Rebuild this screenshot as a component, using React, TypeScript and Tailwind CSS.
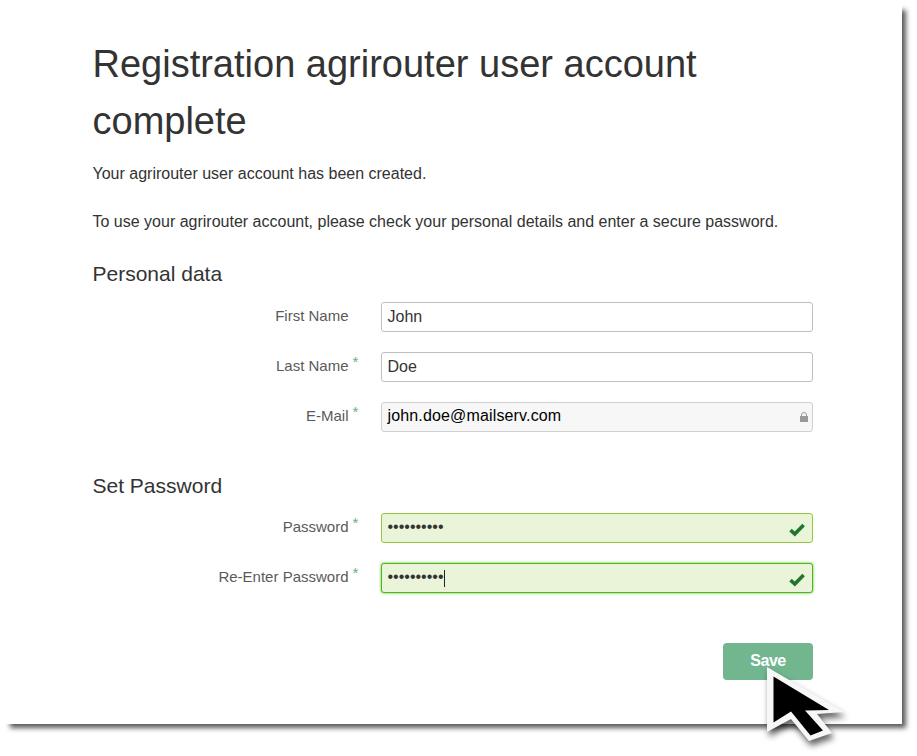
import type { ReactNode } from 'react';

type FieldProps = { label: string; required?: boolean; box: string; children: ReactNode };

function Field({ label, required, box, children }: FieldProps) {
  return (
    <div className="flex h-[30px] items-start">
      <div className="flex w-[256px] justify-end pr-[0.5px] text-[15px] leading-[28px] whitespace-nowrap text-[#5a5a5a]">{label}</div>
      <div className="w-8 pl-[3.5px] text-[15px] leading-[20px] text-[#5fb083]">{required ? '*' : ''}</div>
      <div className={`flex h-[30px] w-[432px] items-center rounded-[3px] border pl-[5.5px] text-[16px] leading-[28px] whitespace-nowrap ${box}`}>
        {children}
      </div>
    </div>
  );
}

function Check() {
  return (
    <svg className="mt-[3px] mr-[7px] ml-auto" width="16" height="14" viewBox="0 0 16 14" fill="none" stroke="#20762f" strokeWidth="3.6">
      <path d="M1.5 7.2 L5.8 11.1 L14.6 2" />
    </svg>
  );
}

export default function App() {
  return (
    <div className="relative h-[756px] w-[917px] overflow-hidden bg-white font-['Liberation_Sans',Arial,sans-serif] text-[#333]">
      <main className="h-[724px] w-[902px] bg-white pt-[36px] pl-[93px] shadow-[7px_7px_5px_-3px_rgba(0,0,0,0.65)]">
        <h1 className="-ml-[0.5px] w-[720px] text-[38px] leading-[57px]">Registration agrirouter user account complete</h1>
        <p className="mt-[12px] -ml-[0.5px] text-[16px] leading-[24px]">Your agrirouter user account has been created.</p>
        <p className="mt-[24px] -ml-[0.5px] text-[16px] leading-[24px] whitespace-nowrap">
          To use your agrirouter account, please check your personal details and enter a secure password.
        </p>
        <h2 className="mt-[25px] -ml-[0.5px] text-[21px] leading-[30px]">Personal data</h2>
        <div className="mt-[13px] flex flex-col gap-[20px]">
          <Field label="First Name" box="border-[#bfbfbf] bg-white">John</Field>
          <Field label="Last Name" required box="border-[#bfbfbf] bg-white">Doe</Field>
          <Field label="E-Mail" required box="border-[#d0d0d0] bg-[#f7f7f7] text-black">
            <span className="-mt-[3px] tracking-[0.15px]">john.doe@mailserv.com</span>
            <svg className="mr-[4px] ml-auto" width="8" height="10" viewBox="0 0 8 10">
              <path d="M1.5 5V3a2.5 2.5 0 0 1 5 0v2" fill="none" stroke="#999" />
              <path d="M0 4h8v6H0z" fill="#999" />
            </svg>
          </Field>
        </div>
        <h2 className="mt-[39px] -ml-[0.5px] text-[21px] leading-[30px]">Set Password</h2>
        <div className="mt-[12px] flex flex-col gap-[20px]">
          <Field label="Password" required box="border-[#93c83d] bg-[#e9f4d9]">
            <span className="-mt-[2px]">••••••••••</span>
            <Check />
          </Field>
          <Field label="Re-Enter Password" required box="border-[#4cb81e] bg-[#e9f4d9] shadow-[0_0_3px_#5cbf2a]">
            <span className="-mt-[2px]">••••••••••</span>
            <span className="h-[17px] w-px bg-[#222]" />
            <Check />
          </Field>
        </div>
        <div className="mt-[50px] ml-[630px] flex h-[37px] w-[90px] items-center justify-center rounded-[4px] bg-[#71b68f] pb-[2px] text-[16px] font-bold tracking-[-0.5px] text-white">
          Save
        </div>
      </main>
      <svg className="absolute top-[660px] left-[760px] drop-shadow-[2px_5px_3px_rgba(0,0,0,0.6)]" width="100" height="96" viewBox="760 660 100 96">
        <path d="M767 667L844 712L817 714L832 733L809 741L791 719L767 732Z" fill="#f7f7f7" />
        <path d="M773.5 676.5L829 710L805 710.5L823 730.5L810.500 735.5L791 711.500L773.5 722.500Z" fill="#000" />
      </svg>
    </div>
  );
}
